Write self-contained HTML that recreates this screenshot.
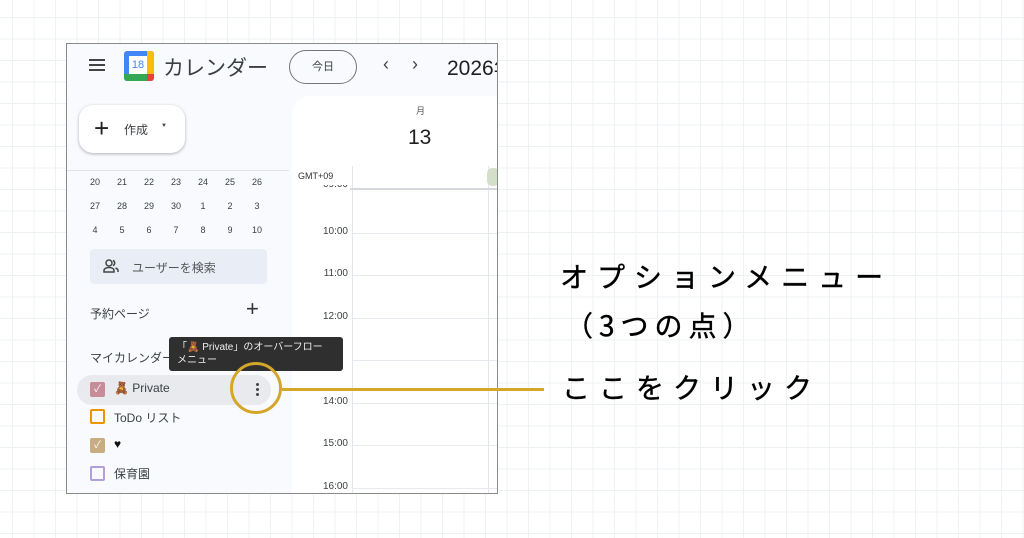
<!DOCTYPE html>
<html><head><meta charset="utf-8"><style>
*{margin:0;padding:0;box-sizing:border-box}
body{width:1024px;height:538px;overflow:hidden;position:relative;font-family:"Liberation Sans","Noto Sans CJK JP",sans-serif;
background-color:#fff;
background-image:linear-gradient(#eef1f3 1px,transparent 1px),linear-gradient(90deg,#eef1f3 1px,transparent 1px);
background-size:21.5px 21.5px;background-position:12px 17px}
.a{position:absolute;white-space:nowrap}
#frame{left:66px;top:43px;width:432px;height:451px;border:1.5px solid #8a8a8a;background:#f8fafd;overflow:hidden}
.t{color:#3c4043;font-size:11px}
.mini span{position:absolute;width:20px;text-align:center;font-size:9px;color:#3c4043}
.hl{position:absolute;left:60px;width:200px;height:1px;background:#e6e9ee}
.hr{position:absolute;left:0;width:56px;text-align:right;font-size:10px;color:#3c4043}
.cb{position:absolute;width:15px;height:15px;border-radius:2px}
.ann{font-family:"Noto Sans CJK JP",sans-serif;font-weight:400;font-size:28px;color:#000;letter-spacing:9px;-webkit-text-stroke:0.4px #000}
</style></head><body>
<div id="frame" class="a">
  <div class="a" style="left:22px;top:15px;width:16px;height:2px;background:#444;box-shadow:0 5px 0 #444,0 10px 0 #444"></div>
  <div class="a" style="left:57px;top:7px;width:30px;height:30px;border-radius:3px;background:#4285f4;overflow:hidden">
    <div class="a" style="left:23px;top:0;width:7px;height:23px;background:#fbbc04"></div>
    <div class="a" style="left:0;top:23px;width:23px;height:7px;background:#34a853"></div>
    <div class="a" style="left:23px;top:23px;width:7px;height:7px;background:#ea4335"></div>
    <div class="a" style="left:5px;top:5px;width:18px;height:18px;background:#fff;color:#4285f4;font-size:11px;text-align:center;line-height:18px">18</div>
  </div>
  <div class="a" style="left:96px;top:8px;font-size:21px;color:#3c4043">カレンダー</div>
  <div class="a" style="left:222px;top:6px;width:68px;height:34px;border:1px solid #747775;border-radius:17px;font-size:11px;color:#3c4043;text-align:center;line-height:32px">今日</div>
  <div class="a" style="left:316px;top:10px;font-size:18px;color:#444">‹</div>
  <div class="a" style="left:345px;top:10px;font-size:18px;color:#444">›</div>
  <div class="a" style="left:380px;top:8px;font-size:21px;color:#1f1f1f">2026年</div>
  <div class="a" style="left:12px;top:61px;width:106px;height:48px;background:#fff;border-radius:14px;box-shadow:0 1px 3px rgba(0,0,0,.3)">
    <div class="a" style="left:15px;top:9px;font-size:26px;line-height:28px;color:#222">+</div>
    <div class="a" style="left:45px;top:16px;font-size:12px;color:#3c4043">作成</div>
    <div class="a" style="left:82px;top:18px;font-size:6px;color:#444">▼</div>
  </div>
  <div class="a" style="left:0;top:126px;width:222px;height:1px;background:#e0e3e7"></div>
  <div class="mini">
    <span style="left:18px;top:133px">20</span><span style="left:45px;top:133px">21</span><span style="left:72px;top:133px">22</span><span style="left:99px;top:133px">23</span><span style="left:126px;top:133px">24</span><span style="left:153px;top:133px">25</span><span style="left:180px;top:133px">26</span>
    <span style="left:18px;top:157px">27</span><span style="left:45px;top:157px">28</span><span style="left:72px;top:157px">29</span><span style="left:99px;top:157px">30</span><span style="left:126px;top:157px">1</span><span style="left:153px;top:157px">2</span><span style="left:180px;top:157px">3</span>
    <span style="left:18px;top:181px">4</span><span style="left:45px;top:181px">5</span><span style="left:72px;top:181px">6</span><span style="left:99px;top:181px">7</span><span style="left:126px;top:181px">8</span><span style="left:153px;top:181px">9</span><span style="left:180px;top:181px">10</span>
  </div>
  <div class="a" style="left:23px;top:205px;width:177px;height:35px;background:#e9eef6;border-radius:4px">
    <svg class="a" style="left:13px;top:10px" width="16" height="14" viewBox="0 0 16 14"><circle cx="6" cy="4" r="3" fill="none" stroke="#444" stroke-width="1.5"/><path d="M1 13v-1.5c0-2 2.5-3 5-3s5 1 5 3V13z" fill="none" stroke="#444" stroke-width="1.5"/><path d="M10 1.3a3 3 0 0 1 0 5.4M12.5 9c1.5.6 2.5 1.4 2.5 2.5V13" fill="none" stroke="#444" stroke-width="1.5"/></svg>
    <div class="a t" style="left:42px;top:10px;font-size:12px;color:#555">ユーザーを検索</div>
  </div>
  <div class="a t" style="left:23px;top:261px;font-size:12px">予約ページ</div>
  <div class="a" style="left:179px;top:254px;font-size:22px;line-height:22px;color:#333">+</div>
  <div class="a t" style="left:23px;top:305px;font-size:12px">マイカレンダー</div>
  <div class="a" style="left:10px;top:331px;width:194px;height:30px;background:#e8eaee;border-radius:15px"></div>
  <div class="cb" style="left:23px;top:338px;background:#c88b98;color:#fff;font-size:10px;text-align:center;line-height:15px">✓</div>
  <div class="a t" style="left:47px;top:337px;font-size:12px">🧸 Private</div>
  <div class="a" style="left:189px;top:339px;width:3px;height:3px;border-radius:50%;background:#444;box-shadow:0 5px 0 #444,0 10px 0 #444"></div>
  <div class="cb" style="left:23px;top:365px;border:2px solid #f09300"></div>
  <div class="a t" style="left:47px;top:365px;font-size:12px">ToDo リスト</div>
  <div class="cb" style="left:23px;top:394px;background:#c8ad80;color:#fff;font-size:10px;text-align:center;line-height:15px">✓</div>
  <div class="a t" style="left:47px;top:393px;font-size:12px;color:#111">♥</div>
  <div class="cb" style="left:23px;top:422px;border:2px solid #b39ddb"></div>
  <div class="a t" style="left:47px;top:421px;font-size:12px">保育園</div>
  <div class="a" style="left:225px;top:52px;width:220px;height:420px;background:#fff;border-radius:18px 0 0 0">
    <div class="a" style="left:124px;top:8px;font-size:9px;color:#555">月</div>
    <div class="a" style="left:116px;top:30px;font-size:21px;color:#1f1f1f">13</div>
    <div class="a" style="left:60px;top:70px;width:1px;height:360px;background:#e3e6ea"></div>
    <div class="a" style="left:196px;top:70px;width:1px;height:360px;background:#e3e6ea"></div>
    <div class="a" style="left:195px;top:72px;width:12px;height:18px;background:#d3dfc8;border-radius:5px"></div>
    <div class="a" style="left:6px;top:75px;font-size:9px;color:#333">GMT+09</div>
    <div class="a" style="left:58px;top:92px;width:150px;height:2px;background:#d4d7db"></div>
    <div class="hr" style="top:89px;height:5px;overflow:hidden;font-size:10px"><span style="position:relative;top:-6px">09:00</span></div>
    <div class="hr" style="top:130px">10:00</div><div class="hl" style="top:137px"></div>
    <div class="hr" style="top:172px">11:00</div><div class="hl" style="top:179px"></div>
    <div class="hr" style="top:215px">12:00</div><div class="hl" style="top:222px"></div>
    <div class="hl" style="top:264px"></div>
    <div class="hr" style="top:300px">14:00</div><div class="hl" style="top:307px"></div>
    <div class="hr" style="top:342px">15:00</div><div class="hl" style="top:349px"></div>
    <div class="hr" style="top:385px">16:00</div><div class="hl" style="top:392px"></div>
  </div>
  <div class="a" style="left:102px;top:293px;width:174px;height:34px;background:#2f2f2f;border-radius:3px;color:#eee;font-size:10px;line-height:13px;padding:4px 8px">「🧸 Private」のオーバーフロー<br>メニュー</div>
</div>
<div class="a" style="left:230px;top:362px;width:52px;height:52px;border:3px solid #d4a62a;border-radius:50%"></div>
<div class="a" style="left:282px;top:388px;width:262px;height:3px;background:#d4a62a"></div>
<div class="a ann" style="left:560px;top:256px">オプションメニュー</div>
<div class="a ann" style="left:565px;top:305px;letter-spacing:6px">（3つの点）</div>
<div class="a ann" style="left:562px;top:367px">ここをクリック</div>
</body></html>
